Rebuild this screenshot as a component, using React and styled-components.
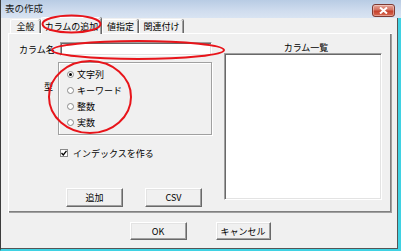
import React from "react";
import styled, { createGlobalStyle } from "styled-components";

const Global = createGlobalStyle`
  html, body { margin: 0; padding: 0; background: #ffffff; }
  body { font-family: "Noto Sans CJK JP", "Liberation Sans", sans-serif; font-size: 9px; color: #000; }
  * { box-sizing: border-box; }
`;

const Win = styled.div`
  position: relative;
  width: 401px;
  height: 251px;
  display: flex;
  flex-direction: column;
  overflow: hidden;
  background: #f0f0f0;
`;

const TitleBar = styled.div`
  height: 18px;
  flex: none;
  display: flex;
  align-items: flex-start;
  justify-content: space-between;
  padding: 0 6px 0 4px;
  background: linear-gradient(#b8cce4, #cfdcee 60%, #d9e4f2);
  border-left: 1px solid #3c3c3c;
`;

const Title = styled.span`
  font-size: 9.5px;
  line-height: 17px;
  color: #1a1a1a;
`;

const CloseBtn = styled.div`
  margin-top: 4px;
  width: 23px;
  height: 13px;
  border-radius: 3px;
  border: 1px solid #7d3a33;
  background: linear-gradient(#e7a699, #d3705f 45%, #c4402c 55%, #d86c55);
  display: flex;
  align-items: center;
  justify-content: center;
  box-shadow: inset 0 0 0 1px rgba(255, 255, 255, 0.35);
`;

const Body = styled.div`
  flex: 1;
  display: flex;
  flex-direction: column;
  padding: 0 6px 0 7px;
  border-left: 1px solid #3c3c3c;
  border-right: 3px solid #3fd2e3;
  border-bottom: 2px solid #3fd2e3;
  box-shadow: inset -1px 0 0 #555, inset 0 -1px 0 #555;
`;

const TabStrip = styled.div`
  height: 15px;
  display: flex;
  align-items: flex-end;
  padding-left: 2px;
  position: relative;
  z-index: 1;
`;

const Tab = styled.div`
  width: ${(p) => p.$w}px;
  margin-left: ${(p) => p.$ml || 0}px;
  height: ${(p) => (p.$active ? 17 : 14)}px;
  margin-bottom: ${(p) => (p.$active ? -1 : 0)}px;
  display: flex;
  align-items: center;
  justify-content: center;
  background: #f0f0f0;
  border-top: 1px solid #ffffff;
  border-left: 1px solid #ffffff;
  border-radius: 2px 2px 0 0;
  box-shadow: 1px 0 0 #696969, inset -1px 0 0 #a0a0a0;
  font-size: 9px;
  line-height: 11px;
  white-space: nowrap;
`;

const Panel = styled.div`
  height: 180px;
  flex: none;
  display: grid;
  grid-template-columns: 193px 158px;
  column-gap: 12px;
  padding: 8px 0 0 10px;
  border-top: 1px solid #ffffff;
  border-left: 1px solid #ffffff;
  box-shadow: inset -1px -1px 0 #a0a0a0, inset -2px -2px 0 #808080;
`;

const LeftCol = styled.div`
  display: flex;
  flex-direction: column;
`;

const NameRow = styled.div`
  display: flex;
  align-items: center;
  height: 14px;
`;

const Label = styled.span`
  width: ${(p) => p.$w}px;
  flex: none;
  font-size: 9px;
  line-height: 11px;
`;

const TextInput = styled.div`
  width: 152px;
  height: 14px;
  background: #ffffff;
  border-top: 1px solid #a0a0a0;
  border-left: 1px solid #a0a0a0;
  border-right: 1px solid #ffffff;
  border-bottom: 1px solid #ffffff;
  box-shadow: inset 1px 1px 0 #696969, inset -1px -1px 0 #e3e3e3;
`;

const TypeRow = styled.div`
  display: flex;
  margin-top: 6px;
`;

const TypeLabel = styled.span`
  width: 39px;
  flex: none;
  padding: 19px 0 0 25px;
  font-size: 9px;
  line-height: 11px;
`;

const GroupBox = styled.div`
  width: 154px;
  height: 73px;
  border: 1px solid #a0a0a0;
  box-shadow: inset 1px 1px 0 #ffffff, 1px 1px 0 #ffffff;
  padding: 3px 0 0 8px;
  display: flex;
  flex-direction: column;
`;

const RadioRow = styled.div`
  height: 16px;
  display: flex;
  align-items: center;
  gap: 3px;
  font-size: 9px;
`;

const RadioCircle = styled.span`
  width: 7px;
  height: 7px;
  border-radius: 50%;
  border: 1px solid #8a8a8a;
  background: #fff;
  display: flex;
  align-items: center;
  justify-content: center;
  &::after {
    content: "";
    width: 3px;
    height: 3px;
    border-radius: 50%;
    background: ${(p) => (p.$on ? "#000" : "transparent")};
  }
`;

const CheckRow = styled.div`
  margin: 12px 0 0 41px;
  height: 12px;
  display: flex;
  align-items: center;
  gap: 5px;
  font-size: 9px;
`;

const CheckBox = styled.span`
  width: 8px;
  height: 8px;
  border: 1px solid #8a8a8a;
  background: #fff;
  display: flex;
  align-items: center;
  justify-content: center;
`;

const ButtonRow = styled.div`
  display: flex;
  gap: ${(p) => p.$gap}px;
  margin: ${(p) => p.$m};
  justify-content: ${(p) => p.$justify || "flex-start"};
`;

const Button = styled.div`
  width: ${(p) => p.$w || 57}px;
  height: ${(p) => p.$h || 19}px;
  background: #f0f0f0;
  border-top: 1px solid #ffffff;
  border-left: 1px solid #ffffff;
  border-right: 1px solid #696969;
  border-bottom: 1px solid #696969;
  box-shadow: inset -1px -1px 0 #a0a0a0, inset 1px 1px 0 #e3e3e3;
  display: flex;
  align-items: center;
  justify-content: center;
  font-size: 9px;
  line-height: 11px;
`;

const RightCol = styled.div`
  display: flex;
  flex-direction: column;
`;

const ListLabel = styled.div`
  height: 11px;
  line-height: 11px;
  text-align: center;
  font-size: 9px;
  padding-left: 6px;
`;

const ListBox = styled.div`
  height: 147px;
  background: #fff;
  border-top: 1px solid #a0a0a0;
  border-left: 1px solid #a0a0a0;
  border-right: 1px solid #ffffff;
  border-bottom: 1px solid #ffffff;
  box-shadow: inset 1px 1px 0 #696969, inset -1px -1px 0 #e3e3e3;
`;

const Overlay = styled.svg`
  position: absolute;
  left: 0;
  top: 0;
  z-index: 5;
  pointer-events: none;
`;

const radios = [
  { t: "文字列", on: true },
  { t: "キーワード" },
  { t: "整数" },
  { t: "実数" },
];

export default function App() {
  return (
    <>
      <Global />
      <Win>
        <TitleBar>
          <Title>表の作成</Title>
          <CloseBtn>
            <svg width="9" height="7" viewBox="0 0 9 7">
              <path d="M1 0.5 L8 6.5 M8 0.5 L1 6.5" stroke="#fff" strokeWidth="2" />
            </svg>
          </CloseBtn>
        </TitleBar>
        <Body>
          <TabStrip>
            <Tab $w={30}>全般</Tab>
            <Tab $w={60} $ml={1} $active>
              カラムの追加
            </Tab>
            <Tab $w={36} $ml={1}>値指定</Tab>
            <Tab $w={44} $ml={1}>関連付け</Tab>
          </TabStrip>
          <Panel>
            <LeftCol>
              <NameRow>
                <Label $w={41}>カラム名</Label>
                <TextInput />
              </NameRow>
              <TypeRow>
                <TypeLabel>型</TypeLabel>
                <GroupBox>
                  {radios.map((r) => (
                    <RadioRow key={r.t}>
                      <RadioCircle $on={r.on} />
                      {r.t}
                    </RadioRow>
                  ))}
                </GroupBox>
              </TypeRow>
              <CheckRow>
                <CheckBox>
                  <svg width="6" height="6" viewBox="0 0 6 6">
                    <path d="M0.5 3 L2.3 5 L5.5 0.8" stroke="#000" strokeWidth="1.3" fill="none" />
                  </svg>
                </CheckBox>
                インデックスを作る
              </CheckRow>
              <ButtonRow $gap={22} $m="29px 0 0 47px">
                <Button>追加</Button>
                <Button>CSV</Button>
              </ButtonRow>
            </LeftCol>
            <RightCol>
              <ListLabel>カラム一覧</ListLabel>
              <ListBox />
            </RightCol>
          </Panel>
          <ButtonRow $gap={29} $m="9px 0 0 0" $justify="center">
            <Button $h={18}>OK</Button>
            <Button $w={55} $h={18}>キャンセル</Button>
          </ButtonRow>
        </Body>
        <Overlay width="401" height="251">
          <g fill="none" stroke="#e8141a" strokeWidth="2">
            <ellipse cx="71.5" cy="24" rx="29" ry="8.5" />
            <ellipse cx="138" cy="50" rx="86" ry="9" />
            <ellipse cx="90" cy="97" rx="41" ry="36" />
          </g>
        </Overlay>
      </Win>
    </>
  );
}
